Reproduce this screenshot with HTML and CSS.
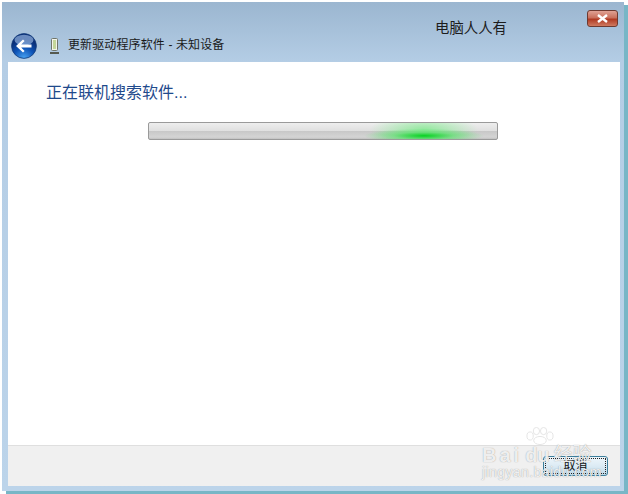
FILE: index.html
```html
<!doctype html>
<html lang="zh-CN">
  <head>
    <meta charset="UTF-8" />
    <title>更新驱动程序软件</title>
    <link rel="stylesheet" href="styles.css">
  </head>
  <body>
    <div class="window">
      <div class="titlebar">
        <svg class="back" width="26" height="26" viewBox="0 0 26 26">
          <defs>
            <radialGradient id="backFill" cx="50%" cy="100%" r="75%">
              <stop offset="0" stop-color="#4aa6f5" />
              <stop offset="0.55" stop-color="#0f55b8" />
              <stop offset="1" stop-color="#0a2f78" />
            </radialGradient>
          </defs>
          <circle cx="13" cy="13" r="12.4" fill="url(#backFill)" stroke="#123a78" stroke-width="0.8" />
          <ellipse cx="13" cy="7" rx="9.5" ry="5.2" fill="#a9c8ee" opacity="0.6" />
          <path d="M5 13 L12 6.5 L13.6 8 L10.2 11.4 L20.5 11.4 L20.5 14.6 L10.2 14.6 L13.6 18 L12 19.5 Z" fill="#fff" />
        </svg>
        <svg class="device" width="9" height="16" viewBox="0 0 9 16">
          <rect x="1.5" y="0.5" width="6" height="12" rx="1" fill="#f2f4ea" stroke="#70756a" />
          <rect x="3" y="2" width="3" height="9" fill="#c4d69a" />
          <rect x="0" y="14" width="9" height="2" fill="#55594f" />
        </svg>
        <span class="title">更新驱动程序软件 - 未知设备</span>
        <span class="brand">电脑人人有</span>
        <button class="close">
          <svg width="13" height="9" viewBox="0 0 13 9">
            <path d="M2 1 L11 8 M11 1 L2 8" stroke="#fff" stroke-width="2.4" />
          </svg>
        </button>
      </div>
      <div class="panel">
        <div class="content">
          <h1>正在联机搜索软件...</h1>
          <div class="progress"><div class="glow"></div></div>
        </div>
        <div class="footer">
          <button class="cancel">取消</button>
        </div>
      </div>
    </div>
    <div class="watermark">
      <svg class="paw" width="32" height="18" viewBox="0 0 32 20">
        <g fill="#fff" stroke="#e2e2e2">
          <ellipse cx="5" cy="10" rx="3.5" ry="4.5" />
          <ellipse cx="12" cy="4.5" rx="3.5" ry="4" />
          <ellipse cx="20" cy="4.5" rx="3.5" ry="4" />
          <ellipse cx="27" cy="10" rx="3.5" ry="4.5" />
          <ellipse cx="16" cy="15" rx="7" ry="4.5" />
        </g>
      </svg>
      <div class="wm-main"><span class="wm-bai">Bai</span><span class="wm-du">du</span><span class="wm-cn">经验</span></div>
      <div class="wm-sub">jingyan.baidu.com</div>
    </div>
  </body>
</html>
```
FILE: styles.css
```css
* {
  box-sizing: border-box;
}

html,
body {
  margin: 0;
  height: 100%;
}

body {
  width: 628px;
  height: 494px;
  overflow: hidden;
  position: relative;
  background: #fff;
  font-family: "Liberation Sans", "Noto Sans CJK SC", sans-serif;
}

.window {
  width: 622px;
  height: 489px;
  margin: 2px 0 0 2px;
  display: flex;
  flex-direction: column;
  padding: 0 4px 5px 6px;
  background: linear-gradient(#9bb6d0, #b4cde5 60px, #bcd4ea);
  box-shadow: 4px 3px 0 #78b6c6;
}

.titlebar {
  height: 60px;
  flex: none;
  display: flex;
  align-items: flex-start;
  position: relative;
}

.back {
  margin: 31px 0 0 3px;
}

.device {
  margin: 36px 0 0 13px;
}

.title {
  margin: 36px 0 0 9px;
  font-size: 12px;
  line-height: 14px;
  letter-spacing: 0.12px;
  color: #1a1a1a;
}

.brand {
  position: absolute;
  left: 427px;
  top: 17px;
  font-size: 14.4px;
  line-height: 18px;
  color: #1c1c1c;
}

.close {
  position: absolute;
  left: 579px;
  top: 8px;
  width: 31px;
  height: 17px;
  padding: 0;
  display: flex;
  align-items: center;
  justify-content: center;
  border: 1px solid #6e3a30;
  border-radius: 3px;
  background: linear-gradient(#e0a294, #c9705c 45%, #b03a22 55%, #cf7a60);
}

.panel {
  flex: 1;
  width: 612px;
  display: flex;
  flex-direction: column;
  background: #fff;
}

.content {
  flex: 1;
  padding: 21px 38px;
}

h1 {
  margin: 0;
  font-size: 16px;
  line-height: 20px;
  font-weight: normal;
  color: #1f4a8c;
}

.progress {
  width: 350px;
  height: 18px;
  margin: 19px 0 0 102px;
  position: relative;
  overflow: hidden;
  border: 1px solid #9a9a9a;
  border-radius: 2px;
  background: linear-gradient(#eeeeee, #e0e0e0 48%, #c8c8c8 52%, #d4d4d4 88%, #c0c0c0);
}

.glow {
  position: absolute;
  left: 215px;
  top: 0;
  width: 120px;
  height: 16px;
  background: radial-gradient(ellipse 50% 45% at 50% 80%, #07d222, rgba(80, 225, 100, 0.6) 50%, rgba(150, 235, 160, 0) 100%), radial-gradient(ellipse 45% 90% at 50% 40%, rgba(120, 235, 135, 0.75), rgba(150, 235, 160, 0) 100%);
}

.footer {
  flex: none;
  height: 41px;
  display: flex;
  justify-content: flex-end;
  align-items: flex-start;
  padding: 10px 12px 0 0;
  background: #f0f0f0;
  border-top: 1px solid #dfdfdf;
}

.cancel {
  width: 65px;
  height: 20px;
  padding: 0;
  font-family: inherit;
  font-size: 12px;
  line-height: 16px;
  color: #111;
  border: 1px solid #3d7f9c;
  border-radius: 3px;
  outline: 1px dotted #222;
  outline-offset: -3px;
  background: linear-gradient(#eef6fb, #dcebf4 50%, #bcd8e8);
}

.watermark {
  position: absolute;
  left: 482px;
  top: 427px;
  width: 120px;
  color: rgba(255, 255, 255, 0.85);
  text-shadow: 0 0 1px rgba(120, 120, 120, 0.8);
  pointer-events: none;
}

.paw {
  display: block;
  margin-left: 42px;
}

.wm-main {
  display: flex;
  font-size: 20px;
  line-height: 20px;
  font-weight: bold;
  white-space: nowrap;
}

.wm-bai {
  letter-spacing: 3px;
}

.wm-du {
  margin-left: 3px;
}

.wm-cn {
  margin-left: 4px;
  font-size: 19px;
  font-weight: normal;
}

.wm-sub {
  font-size: 14px;
  line-height: 14px;
  letter-spacing: 0.4px;
  white-space: nowrap;
}
```
